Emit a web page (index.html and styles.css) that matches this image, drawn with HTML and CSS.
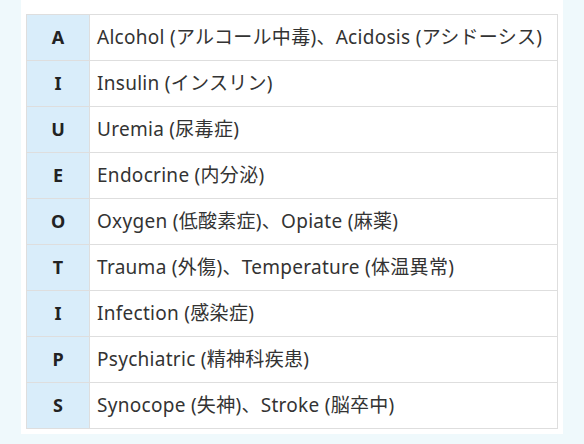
FILE: index.html
```html
<!DOCTYPE html>
<html lang="ja">
<head>
<meta charset="utf-8">
<link rel="stylesheet" href="styles.css">
</head>
<body>
<div class="panel">
<table class="aiueo">
<tr><th>A</th><td>Alcohol (アルコール中毒)、Acidosis (アシドーシス)</td></tr>
<tr><th>I</th><td>Insulin (インスリン)</td></tr>
<tr><th>U</th><td>Uremia (尿毒症)</td></tr>
<tr><th>E</th><td>Endocrine (内分泌)</td></tr>
<tr><th>O</th><td>Oxygen (低酸素症)、Opiate (麻薬)</td></tr>
<tr><th>T</th><td>Trauma (外傷)、Temperature (体温異常)</td></tr>
<tr><th>I</th><td>Infection (感染症)</td></tr>
<tr><th>P</th><td>Psychiatric (精神科疾患)</td></tr>
<tr><th>S</th><td>Synocope (失神)、Stroke (脳卒中)</td></tr>
</table>
</div>
</body>
</html>
```
FILE: styles.css
```css
html, body {
  margin: 0;
  padding: 0;
  background: #eff9fc;
}
body {
  font-family: "Noto Sans", "Noto Sans CJK JP", sans-serif;
  color: #333;
}
.panel {
  width: 532px;
  margin: 0 auto;
  background: #fff;
  padding: 14px 5px 5px 5px;
}
.aiueo {
  width: 100%;
  border-collapse: collapse;
  table-layout: fixed;
  font-size: 19px;
}
.aiueo th, .aiueo td {
  border: 1px solid #dedede;
  height: 45px;
  padding: 0 0 0 7px;
  line-height: 1.2;
}
.aiueo th {
  width: 63px;
  padding: 0;
  box-sizing: border-box;
  background: #d9edfa;
  font-size: 18px;
  font-weight: bold;
  text-align: center;
  color: #222;
}
.aiueo td {
  text-align: left;
  white-space: nowrap;
  letter-spacing: 0.015em;
}
```
